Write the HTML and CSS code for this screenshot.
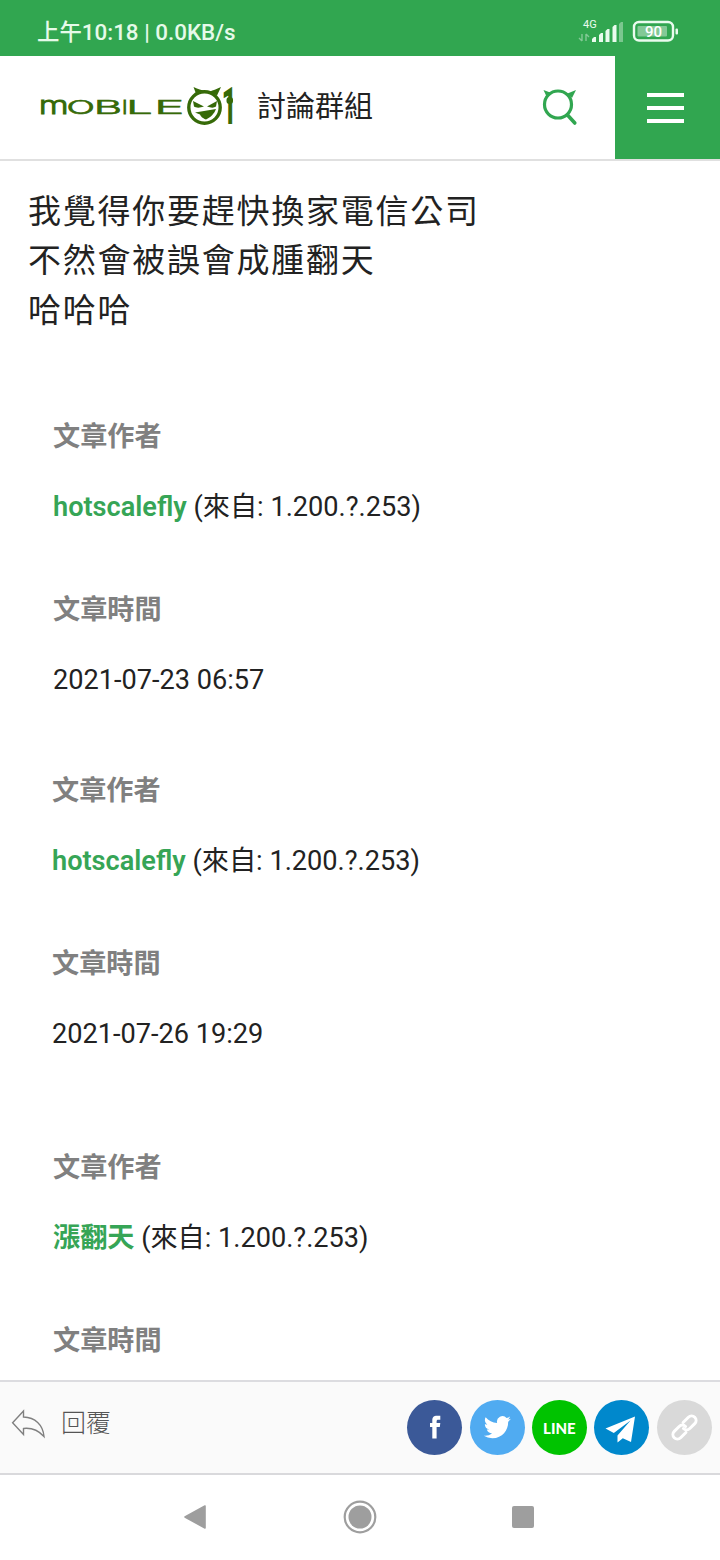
FILE: index.html
```
<!DOCTYPE html>
<html lang="zh-Hant">
<head>
    <meta charset="UTF-8">
    <meta name="viewport" content="width=device-width, initial-scale=1.0">
    <title>Mobile01 討論群組</title>
    <link rel="stylesheet" href="styles.css">
</head>
<body>
    <div class="status-bar">
        <div class="status-time">上午10:18 | 0.0KB/s</div>
        <svg class="status-icons" width="104" height="30" viewBox="576 16 104 30">
            <text class="status-net" x="583" y="28">4G</text>
            <g class="dim" fill="none" stroke="#fff" stroke-width="1.4">
                <path d="M582 34v7M582 41l-3-3M586 41v-7M586 34l3 3"/>
            </g>
            <g fill="#eafbee">
                <path d="M592 42v-3l2-2h2v5zM599 42v-7l2-2h2v9zM605.500 42V31l2-2h2v13zM612.500 42V27l2-2h2v17z"/>
                <path class="dim" d="M619 42V24l2-2h2v20z"/>
                <rect x="675.500" y="28.500" width="2.500" height="6" rx="1"/>
            </g>
            <rect x="634" y="22" width="39" height="18.500" rx="5" fill="none" stroke="#eafbee" stroke-width="2.400"/>
            <rect class="dim" x="637.500" y="26" width="29.500" height="10.500" rx="1" fill="#fff"/>
            <text class="status-battery" x="653.500" y="37" text-anchor="middle">90</text>
        </svg>
    </div>

    <div class="header">
        <svg class="logo" width="194" height="42" viewBox="40 84 194 42">
            <text class="logo-text" transform="translate(38.700 114) scale(1.370 1)" font-size="25">m</text>
            <text class="logo-text" transform="translate(66.500 114) scale(1.970 1)">O</text>
            <text class="logo-text" transform="translate(93.700 114) scale(2.300 1)">B</text>
            <text class="logo-text" transform="translate(122.200 114)">I</text>
            <text class="logo-text" transform="translate(126 114) scale(2.500 1)">L</text>
            <text class="logo-text" transform="translate(154 114) scale(2.700 1)">E</text>
            <circle cx="204.500" cy="107.500" r="15.700" fill="none" stroke="#366a08" stroke-width="3.400"/>
            <path fill="#366a08" d="M193.500 87c5 2.500 8 3 11 4l-8 4zM221 87c-5 2.500-8 3-11 4.500l7 4zM193 101l11 5.500c-4 1.500-8 1.500-10 0zM217 101l-10 5.500c4 1.500 7 1.500 9 0zM195 112.500l21-3.500c-2 5-5 8-10 10.500-4-1.500-5-3-6-5z"/>
            <text class="logo-one" transform="translate(221.500 124.300) scale(.520 1)">1</text>
            <rect x="226.500" y="97" width="6.500" height="7" rx="3" fill="#366a08"/>
        </svg>
        <div class="header-title">討論群組</div>
        <svg class="search-icon" width="38" height="38" viewBox="541 89 38 38">
            <circle cx="558" cy="105.500" r="13.500" fill="none" stroke="#31a650" stroke-width="3.200"/>
            <path d="M567.500 116l7.300 8" fill="none" stroke="#31a650" stroke-width="3.600" stroke-linecap="round"/>
            <path d="M543.500 91l8 3-4.500 4.500zM576 91l-8.500 3.500 4.500 4.500z" fill="#31a650"/>
        </svg>
        <div class="menu-button">
            <span></span>
            <span></span>
            <span></span>
        </div>
    </div>

    <div class="content">
        <div class="message">
            我覺得你要趕快換家電信公司<br>
            不然會被誤會成腫翻天<br>
            哈哈哈
        </div>

        <div class="post-info">
            <div class="label">文章作者</div>
            <div class="value"><b>hotscalefly</b> (來自: 1.200.?.253)</div>
            <div class="label">文章時間</div>
            <div class="value">2021-07-23 06:57</div>
        </div>
        <div class="post-info second">
            <div class="label">文章作者</div>
            <div class="value"><b>hotscalefly</b> (來自: 1.200.?.253)</div>
            <div class="label">文章時間</div>
            <div class="value">2021-07-26 19:29</div>
        </div>
        <div class="post-info third">
            <div class="label">文章作者</div>
            <div class="value"><b>漲翻天</b> (來自: 1.200.?.253)</div>
            <div class="label">文章時間</div>
        </div>
    </div>

    <div class="action-bar">
        <div class="reply">
            <svg width="36" height="32" viewBox="11 1408 36 32">
                <path d="M23.500 1411L12.600 1422.700 23.500 1434.500V1428.500C32 1427.500 38 1430 44 1436.500 43 1424.500 35 1417.500 23.500 1417z" fill="none" stroke="#808080" stroke-width="1.400"/>
            </svg>
            <span>回覆</span>
        </div>
        <div class="share">
            <div class="share-item facebook">
                <svg width="55" height="55" viewBox="407 1400 55 55">
                    <path d="M432.300 1438.500v-11.500h-2.300v-4h2.300v-2.500c0-3.500 1.700-4.700 4.600-4.700h3.400v4h-2c-1.300 0-1.700.5-1.700 1.600v1.600h3.700l-.5 4h-3.200v11.500z" fill="#fff"/>
                </svg>
            </div>
            <div class="share-item twitter">
                <svg width="55" height="55" viewBox="0 0 55 55">
                    <path transform="translate(13.800 13.600) scale(1.130)" fill="#fff" d="M23.950 4.570a10 10 0 0 1-2.820.770 4.960 4.960 0 0 0 2.160-2.720c-.950.550-2 .950-3.130 1.180a4.920 4.920 0 0 0-8.380 4.480C7.690 8.090 4.070 6.130 1.640 3.160a4.920 4.920 0 0 0 1.520 6.570 4.900 4.900 0 0 1-2.230-.610v.060a4.920 4.920 0 0 0 3.950 4.830 5 5 0 0 1-2.210.080 4.940 4.940 0 0 0 4.600 3.420A9.870 9.870 0 0 1 0 19.540a13.990 13.990 0 0 0 7.550 2.210c9.050 0 14-7.500 14-13.980 0-.210 0-.420-.020-.630a9.940 9.940 0 0 0 2.420-2.570z"/>
                </svg>
            </div>
            <div class="share-item line">LINE</div>
            <div class="share-item telegram">
                <svg width="55" height="55" viewBox="594 1400 55 55">
                    <path fill="#fff" d="M605.500 1428.500L635 1416.500 631 1442 622.800 1438.300 617.500 1442.500V1435.500L630.500 1420.500 613.800 1433z"/>
                </svg>
            </div>
            <div class="share-item link">
                <svg width="55" height="55" viewBox="0 0 55 55">
                    <g fill="none" stroke="#fff" stroke-width="3" stroke-linecap="round" transform="translate(27.500 27.500) rotate(-45)">
                        <path d="M-2.500 4.500H-10a4.500 4.500 0 0 1 0-9H-3a4.500 4.500 0 0 1 4.500 4.500"/>
                        <path d="M2.500-4.500H10a4.500 4.500 0 0 1 0 9H3a4.500 4.500 0 0 1-4.500-4.500"/>
                    </g>
                </svg>
            </div>
        </div>
    </div>

    <div class="nav-bar">
        <svg width="24" height="28" viewBox="183 1503 24 28">
            <path d="M205 1506v22l-20-11z" fill="#9e9e9e" stroke="#9e9e9e" stroke-width="1.600" stroke-linejoin="round"/>
        </svg>
        <svg width="34" height="34" viewBox="0 0 34 34">
            <circle cx="17" cy="17" r="15.300" fill="none" stroke="#9e9e9e" stroke-width="2.200"/>
            <circle cx="17" cy="17" r="11.500" fill="#9e9e9e"/>
        </svg>
        <div class="nav-square"></div>
    </div>
</body>
</html>
```
FILE: styles.css
```
body {
    font-family: Roboto, "Noto Sans CJK TC", sans-serif;
    margin: 0;
    width: 720px;
    height: 1560px;
    display: flex;
    flex-direction: column;
    background-color: #fff;
    color: #222;
    overflow: hidden;
}
.status-bar {
    height: 56px;
    padding: 6px 40px 0 37px;
    box-sizing: border-box;
    display: flex;
    justify-content: space-between;
    align-items: center;
    background-color: #31a650;
    color: #e6fae9;
}
.status-time {
    font-size: 22.4px;
    font-weight: 500;
    white-space: nowrap;
    margin-bottom: 2px;
}
.status-icons .dim {
    opacity: 0.4;
}
.status-net {
    font-size: 11px;
    fill: #eafbee;
}
.status-battery {
    font-size: 15px;
    font-weight: 500;
    fill: #fff;
}
.header {
    height: 105px;
    box-sizing: border-box;
    border-bottom: 2px solid #e0e0e0;
    display: flex;
    align-items: center;
    padding-left: 40px;
}
.logo {
    margin-bottom: 5px;
    overflow: visible;
}
.logo-text {
    font-family: Inter, sans-serif;
    font-size: 19px;
    font-weight: 300;
    fill: #366a08;
    stroke: #366a08;
    stroke-width: 1px;
    vector-effect: non-scaling-stroke;
}
.logo-text:first-child {
    font-size: 25px;
}
.logo-one {
    font-size: 52px;
    font-weight: 700;
    fill: #366a08;
}
.header-title {
    font-size: 29px;
    margin: 0 0 8px 23px;
    flex: 1;
}
.search-icon {
    margin: 0 36px 1px 0;
}
.menu-button {
    width: 105px;
    height: 103px;
    box-sizing: border-box;
    padding-right: 4px;
    display: flex;
    flex-direction: column;
    justify-content: center;
    align-items: center;
    gap: 9px;
    background-color: #31a650;
}
.menu-button span {
    width: 37px;
    height: 4px;
    background-color: #fff;
}
.content {
    flex: 1;
    overflow: hidden;
}
.message {
    padding: 26px 28px 0;
    font-size: 33px;
    line-height: 49.4px;
    letter-spacing: 1.75px;
}
.post-info {
    margin: 82px 0 0 53px;
    font-size: 27.15px;
    line-height: 40px;
}
.post-info.second {
    margin: 71px 0 0 52px;
}
.post-info.third {
    margin: 94px 0 0 53px;
}
.label {
    color: #808080;
    font-weight: 700;
    margin-bottom: 30px;
}
.value {
    margin-bottom: 63px;
}
.value:last-child {
    margin-bottom: 0;
}
.value b {
    color: #36a556;
    font-weight: 600;
}
.action-bar {
    height: 95px;
    box-sizing: border-box;
    border-top: 2px solid #dcdce0;
    border-bottom: 2px solid #d9d9dc;
    background-color: #fafafa;
    display: flex;
    justify-content: space-between;
    align-items: center;
    padding: 0 8.5px 0 11px;
}
.reply {
    display: flex;
    align-items: center;
    gap: 14px;
    margin-bottom: 7px;
    font-size: 25px;
    font-weight: 300;
    color: #555;
}
.reply span {
    margin-bottom: 6px;
}
.share {
    display: flex;
    gap: 7.3px;
}
.share-item {
    width: 55px;
    height: 55px;
    border-radius: 50%;
    display: flex;
    justify-content: center;
    align-items: center;
}
.facebook {
    background-color: #3b5998;
}
.twitter {
    background-color: #50abf1;
}
.line {
    background-color: #00c300;
    color: #fff;
    font-family: Lato, sans-serif;
    font-size: 15px;
    font-weight: 900;
}
.telegram {
    background-color: #0088cc;
}
.link {
    background-color: #d9d9d9;
}
.nav-bar {
    height: 85px;
    box-sizing: border-box;
    padding: 0 186px 1px 183px;
    display: flex;
    justify-content: space-between;
    align-items: center;
}
.nav-square {
    width: 22px;
    height: 22px;
    border-radius: 2px;
    background-color: #9e9e9e;
}
```
